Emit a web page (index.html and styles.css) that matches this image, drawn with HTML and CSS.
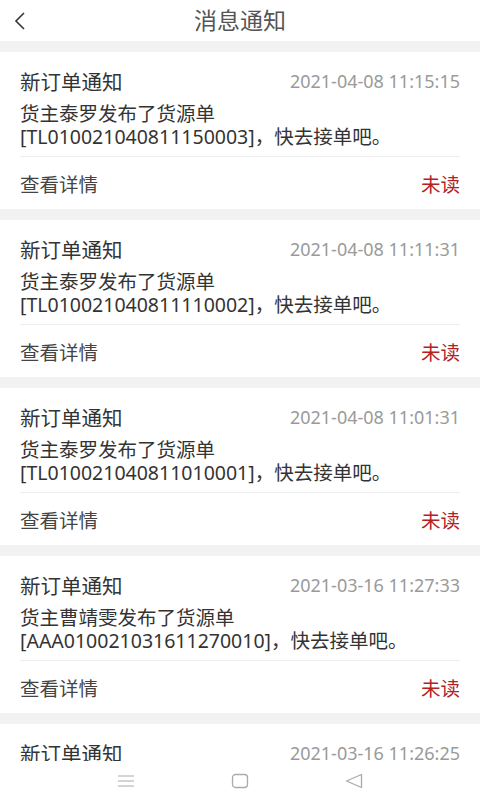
FILE: index.html
```html
<!DOCTYPE html>
<html lang="zh-CN">
<head>
<meta charset="UTF-8">
<meta name="viewport" content="width=device-width, initial-scale=1.0">
<title>消息通知</title>
<link rel="stylesheet" href="styles.css">
</head>
<body>

<!-- 顶部标题栏 -->
<div class="topbar">
    <span class="back">
        <svg width="14" height="20" viewBox="0 0 14 20"><path d="M11 2 L3 10 L11 18" fill="none" stroke="#333" stroke-width="1.6"/></svg>
    </span>
    <h1>消息通知</h1>
</div>

<!-- 消息列表 -->
<div class="list">
    <div class="card">
        <div class="card-head">
            <span class="card-title">新订单通知</span>
            <span class="card-time">2021-04-08 11:15:15</span>
        </div>
        <div class="card-body">货主泰罗发布了货源单<br>[TL010021040811150003]，快去接单吧。</div>
        <div class="card-foot">
            <span>查看详情</span>
            <span class="unread">未读</span>
        </div>
    </div>
    <div class="card">
        <div class="card-head">
            <span class="card-title">新订单通知</span>
            <span class="card-time">2021-04-08 11:11:31</span>
        </div>
        <div class="card-body">货主泰罗发布了货源单<br>[TL010021040811110002]，快去接单吧。</div>
        <div class="card-foot">
            <span>查看详情</span>
            <span class="unread">未读</span>
        </div>
    </div>
    <div class="card">
        <div class="card-head">
            <span class="card-title">新订单通知</span>
            <span class="card-time">2021-04-08 11:01:31</span>
        </div>
        <div class="card-body">货主泰罗发布了货源单<br>[TL010021040811010001]，快去接单吧。</div>
        <div class="card-foot">
            <span>查看详情</span>
            <span class="unread">未读</span>
        </div>
    </div>
    <div class="card">
        <div class="card-head">
            <span class="card-title">新订单通知</span>
            <span class="card-time">2021-03-16 11:27:33</span>
        </div>
        <div class="card-body">货主曹靖雯发布了货源单<br>[AAA010021031611270010]，快去接单吧。</div>
        <div class="card-foot">
            <span>查看详情</span>
            <span class="unread">未读</span>
        </div>
    </div>
    <div class="card">
        <div class="card-head">
            <span class="card-title">新订单通知</span>
            <span class="card-time">2021-03-16 11:26:25</span>
        </div>
    </div>
</div>

<!-- 系统导航栏 -->
<div class="navbar">
    <svg width="18" height="14" viewBox="0 0 18 14"><path d="M1 2 H17 M1 7 H17 M1 12 H17" stroke="#aaa" stroke-width="1.2"/></svg>
    <svg width="18" height="16" viewBox="0 0 18 16"><rect x="1.5" y="1.5" width="15" height="13" rx="3" fill="none" stroke="#aaa" stroke-width="1.3"/></svg>
    <svg width="18" height="16" viewBox="0 0 18 16"><path d="M16.5 1.5 L1.5 8 L16.5 14.5 Z" fill="none" stroke="#aaa" stroke-width="1.3" stroke-linejoin="round"/></svg>
</div>

</body>
</html>
```

FILE: styles.css
```css
body {
    margin: 0;
    padding: 0;
    font-family: "Noto Sans", "Noto Sans CJK SC", sans-serif;
    background: #f2f2f2;
    color: #333;
    overflow: hidden;
    height: 800px;
}

.topbar {
    height: 41px;
    background: #ffffff;
    display: flex;
    align-items: center;
    justify-content: center;
    position: relative;
}

.topbar h1 {
    margin: 0;
    font-size: 23px;
    font-weight: normal;
    color: #555;
    line-height: 41px;
}

.back {
    position: absolute;
    left: 13px;
    top: 11px;
}

.list {
    padding-top: 11px;
    display: flex;
    flex-direction: column;
    gap: 11px;
}

.card {
    background: #ffffff;
    padding: 0 20px;
    min-height: 60px;
}

.card-head {
    display: flex;
    justify-content: space-between;
    align-items: center;
    padding-top: 17px;
    height: 24px;
}

.card-title {
    font-size: 20.5px;
    color: #333;
}

.card-time {
    font-size: 18px;
    color: #9a9a9a;
}

.card-body {
    margin-top: 9px;
    padding-bottom: 8px;
    font-size: 19.5px;
    line-height: 23px;
    color: #333;
    border-bottom: 1px solid #eeeeee;
}

.card-foot {
    height: 52px;
    display: flex;
    justify-content: space-between;
    align-items: center;
    font-size: 19.5px;
    color: #444;
}

.unread {
    color: #b3221f;
}

.navbar {
    position: fixed;
    left: 0;
    right: 0;
    bottom: 0;
    height: 39px;
    background: #ffffff;
    display: flex;
    justify-content: space-between;
    align-items: center;
    padding: 0 117px 0 117px;
}
```
